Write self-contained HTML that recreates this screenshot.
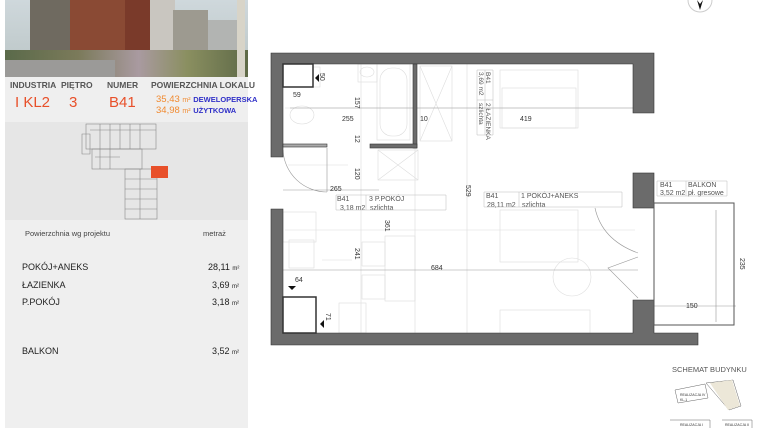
<!DOCTYPE html>
<html><head><meta charset="utf-8"><style>
*{margin:0;padding:0;box-sizing:border-box}
body{width:760px;height:428px;background:#fff;position:relative;overflow:hidden;font-family:"Liberation Sans",Arial,sans-serif}
.a{position:absolute;white-space:nowrap}
</style></head><body>
<div class="a" style="left:5px;top:0;width:243px;height:428px;background:#efefef"></div>
<div class="a" style="left:5px;top:0;width:243px;height:77px;overflow:hidden;background:linear-gradient(#cfd8dc,#b9c4c4)">
 <div class="a" style="left:25px;top:0;width:45px;height:55px;background:#6f6a60"></div>
 <div class="a" style="left:65px;top:0;width:55px;height:58px;background:#8a4a34"></div>
 <div class="a" style="left:120px;top:0;width:30px;height:55px;background:#7a3a2a"></div>
 <div class="a" style="left:145px;top:0;width:25px;height:55px;background:#c9c6c0"></div>
 <div class="a" style="left:168px;top:10px;width:35px;height:45px;background:#9d9a90"></div>
 <div class="a" style="left:203px;top:20px;width:30px;height:35px;background:#b2b4b2"></div>
 <div class="a" style="left:0;top:50px;width:243px;height:27px;background:linear-gradient(90deg,#5a6a4a,#7b7a5a 30%,#a99aa0 55%,#8a8f60 75%,#5f6a48)"></div>
 <div class="a" style="left:0;top:60px;width:110px;height:17px;background:#9b9a98"></div>
 <div class="a" style="left:232px;top:0;width:8px;height:77px;background:#d8d4c8"></div>
</div>
<div class="a" style="left:10px;top:80px;font-size:8.5px;font-weight:bold;color:#555">INDUSTRIA</div>
<div class="a" style="left:61px;top:80px;font-size:8.5px;font-weight:bold;color:#555">PIĘTRO</div>
<div class="a" style="left:107px;top:80px;font-size:8.5px;font-weight:bold;color:#555">NUMER</div>
<div class="a" style="left:151px;top:80px;font-size:8.5px;font-weight:bold;color:#555">POWIERZCHNIA LOKALU</div>
<div class="a" style="left:15px;top:94px;font-size:15px;color:#e8502a">I KL2</div>
<div class="a" style="left:69px;top:94px;font-size:15px;color:#e8502a">3</div>
<div class="a" style="left:109px;top:94px;font-size:15px;color:#e8502a">B41</div>
<div class="a" style="left:156px;top:94px;font-size:9.5px;color:#f08a30">35,43 <span style="font-size:7px">m²</span> <span style="font-size:7.5px;color:#3030c8;font-weight:bold">DEWELOPERSKA</span></div>
<div class="a" style="left:156px;top:105px;font-size:9.5px;color:#f08a30">34,98 <span style="font-size:7px">m²</span> <span style="font-size:7.5px;color:#3030c8;font-weight:bold">UŻYTKOWA</span></div>
<div class="a" style="left:5px;top:122px;width:243px;height:98px;background:#e6e6e6"></div>
<svg class="a" style="left:80px;top:122px" width="100" height="98" viewBox="0 0 100 98">
 <g fill="none" stroke="#888" stroke-width="0.6">
  <rect x="6" y="2" width="70" height="25"/><rect x="12" y="27" width="50" height="20"/>
  <rect x="45" y="47" width="32" height="50"/><path d="M10 8h66M20 2v25M30 2v25M40 2v25M50 2v25M60 2v25M45 57h32M45 67h32M45 77h32M45 87h32M60 47v50M2 12h8v20h-8zM15 35h25M20 27v20M30 27v20"/>
 </g>
 <rect x="71" y="44" width="17" height="12" fill="#e8502a"/>
</svg>
<div class="a" style="left:25px;top:229px;font-size:7.5px;color:#444">Powierzchnia wg projektu</div>
<div class="a" style="left:203px;top:229px;font-size:7.5px;color:#444">metraż</div>
<div class="a" style="left:22px;top:262px;font-size:9px;color:#222">POKÓJ+ANEKS</div>
<div class="a" style="left:22px;top:280px;font-size:9px;color:#222">ŁAZIENKA</div>
<div class="a" style="left:22px;top:297px;font-size:9px;color:#222">P.POKÓJ</div>
<div class="a" style="left:22px;top:346px;font-size:9px;color:#222">BALKON</div>
<div class="a" style="left:208px;top:262px;font-size:9px;color:#222">28,11 <span style="font-size:6px">m²</span></div>
<div class="a" style="left:212px;top:280px;font-size:9px;color:#222">3,69 <span style="font-size:6px">m²</span></div>
<div class="a" style="left:212px;top:297px;font-size:9px;color:#222">3,18 <span style="font-size:6px">m²</span></div>
<div class="a" style="left:212px;top:346px;font-size:9px;color:#222">3,52 <span style="font-size:6px">m²</span></div>

<svg class="a" style="left:685px;top:0" width="30" height="14"><circle cx="15" cy="0" r="12" fill="none" stroke="#ccc"/><path d="M12 0l3 10l3 -10l-3 4z" fill="#111"/></svg>

<svg class="a" style="left:0;top:0" width="760" height="428" viewBox="0 0 760 428" font-family="Liberation Sans,Arial,sans-serif">
 <g fill="none" stroke="#ddd" stroke-width="0.6">
  <path d="M415 64v270M467 64v270M361 64v270M285 108h350M285 230h350M288 165h60M322 260h30"/>
  <rect x="358" y="64" width="19" height="18"/><ellipse cx="367" cy="72" rx="7" ry="5"/>
  <rect x="377" y="64" width="33" height="76"/><rect x="380" y="68" width="27" height="68" rx="12"/>
  <rect x="420" y="66" width="32" height="75"/><path d="M420 66l32 75M452 66l-32 75"/>
  <rect x="378" y="150" width="40" height="30"/><path d="M378 150l40 30M418 150l-40 30"/>
  <rect x="500" y="70" width="78" height="58"/><rect x="502" y="88" width="74" height="40"/>
  <rect x="500" y="210" width="78" height="52"/><circle cx="572" cy="277" r="19"/>
  <rect x="500" y="310" width="90" height="24"/><rect x="385" y="236" width="30" height="65"/>
  <rect x="362" y="242" width="23" height="24"/><rect x="362" y="275" width="23" height="24"/>
  <rect x="339" y="303" width="27" height="30"/><rect x="289" y="240" width="25" height="28"/>
  <rect x="283" y="212" width="33" height="30"/><rect x="310" y="67" width="10" height="20"/>
  <ellipse cx="302" cy="115" rx="12" ry="9"/>
 </g>
 <g fill="none" stroke="#999" stroke-width="0.6">
  <path d="M283 150A44 44 0 0 0 327 192M327 148v44M283 190h96M283 270h355M290 108h345"/>
  <path d="M595 208Q602 240 638 253M638 257L608 268L638 298"/>
  <path d="M654 306h82M716 210v112"/>
 </g>
 <g fill="#6b6b6b" stroke="#333" stroke-width="0.6">
  <path d="M271 53h383v60h-21v-49h-350v93h-12z"/>
  <path d="M271 209h12v124h350v-33h21v33h44v12h-427z"/>
  <rect x="633" y="173" width="21" height="35"/>
  <rect x="413" y="64" width="4" height="84"/><rect x="370" y="144" width="47" height="4"/>
  <rect x="283" y="144" width="44" height="3" fill="#aaa"/>
  <path d="M283 64h30v23h-30z" fill="#fff" stroke-width="1.5"/>
  <path d="M283 297h33v36h-33z" fill="#fff" stroke-width="1.5"/>
 </g>
 <rect x="654" y="203" width="80" height="122" fill="none" stroke="#555" stroke-width="1"/>
 <g font-size="7" fill="#333">
  <text x="320" y="73" transform="rotate(90 320 73)">50</text>
  <text x="293" y="97">59</text>
  <text x="342" y="121">255</text>
  <text x="420" y="121">10</text>
  <text x="520" y="121">419</text>
  <text x="355" y="97" transform="rotate(90 355 97)">157</text>
  <text x="355" y="135" transform="rotate(90 355 135)">12</text>
  <text x="355" y="168" transform="rotate(90 355 168)">120</text>
  <text x="330" y="191">265</text>
  <text x="466" y="185" transform="rotate(90 466 185)">529</text>
  <text x="385" y="220" transform="rotate(90 385 220)">361</text>
  <text x="355" y="248" transform="rotate(90 355 248)">241</text>
  <text x="431" y="270">684</text>
  <text x="295" y="282">64</text>
  <text x="326" y="313" transform="rotate(90 326 313)">71</text>
  <text x="686" y="308">150</text>
  <text x="740" y="258" transform="rotate(90 740 258)">235</text>
 </g>
 <g font-size="7" fill="#555" stroke="none">
  <text x="337" y="201">B41</text><text x="369" y="201">3 P.POKÓJ</text>
  <text x="340" y="210">3,18 m2</text><text x="370" y="210">szlichta</text>
  <text x="486" y="198">B41</text><text x="521" y="198">1 POKÓJ+ANEKS</text>
  <text x="487" y="207">28,11 m2</text><text x="522" y="207">szlichta</text>
  <text x="660" y="187">B41</text><text x="688" y="187">BALKON</text>
  <text x="660" y="195">3,52 m2</text><text x="688" y="195">pł. gresowe</text>
 </g>
 <g font-size="6.5" fill="#555">
  <text x="486" y="72" transform="rotate(90 486 72)">B41</text><text x="486" y="103" transform="rotate(90 486 103)">2 ŁAZIENKA</text>
  <text x="479" y="72" transform="rotate(90 479 72)">3,69 m2</text><text x="479" y="103" transform="rotate(90 479 103)">szlichta</text>
 </g>
 <g fill="none" stroke="#bbb" stroke-width="0.5">
  <path d="M336 195h110v15h-110zM366 195v15M484 192h138v15h-138zM519 192v15M657 181h70v15h-70zM686 181v15M477 70h16v65h-16zM477 100h16M485 70v65"/>
 </g>
 <path d="M288 286l4 4l4-4zM324 320l-4 4l4 4z M315 78l4 4v-8z" fill="#111"/>
 <text x="672" y="372" font-size="7.5" fill="#555">SCHEMAT BUDYNKU</text>
 <path d="M675 390l30-6l3 14l-30 5zM706 383l27-3l8 26l-12 4z" fill="none" stroke="#666" stroke-width="0.5"/>
 <path d="M710 383l22-3l8 26l-12 4z" fill="#ece7d8"/>
 <text x="680" y="396" font-size="3.5" fill="#333">REALIZACJA IV</text>
 <text x="680" y="401" font-size="3.5" fill="#333">KL.1</text>
 <path d="M670 420h40v8M722 420h30v8" fill="none" stroke="#666" stroke-width="0.5"/>
 <text x="680" y="426" font-size="3.5" fill="#333">REALIZACJA I</text>
 <text x="725" y="426" font-size="3.5" fill="#333">REALIZACJA II</text>
</svg>
</body></html>
